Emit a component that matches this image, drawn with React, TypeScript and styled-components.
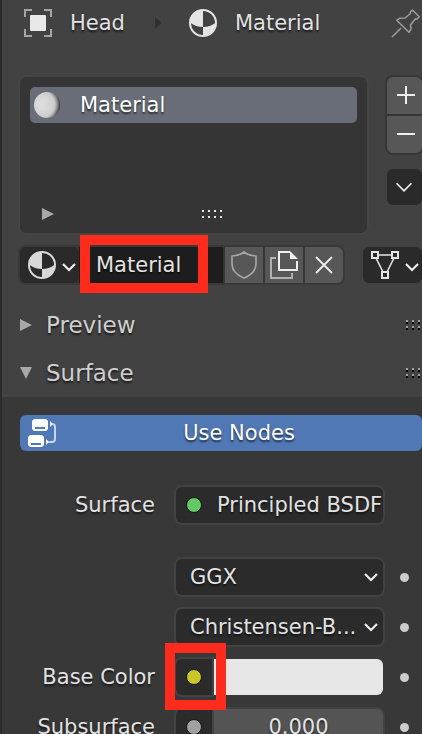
import React from "react";
import styled, { createGlobalStyle, css } from "styled-components";

const GlobalStyle = createGlobalStyle`
  *, *::before, *::after { box-sizing: border-box; }
  html, body { margin: 0; background: #424242; overflow: hidden; }
  body, button, input, select {
    font-family: "DejaVu Sans", sans-serif;
    font-size: 21px;
    line-height: 24px;
    color: #e2e2e2;
  }
  button { margin: 0; padding: 0; border: 0; }
  h2 { margin: 0; font-weight: 400; }
  svg { display: block; flex: none; overflow: visible; }
`;

const textShadow = css`
  text-shadow: 0 2px 2px rgba(0, 0, 0, 0.6);
`;

const Editor = styled.main`
  height: 100vh;
  overflow: hidden;
  border-left: 2px solid #2c2c2c;
  background: #424242;
`;

const Breadcrumbs = styled.nav`
  display: flex;
  align-items: center;
  height: 46px;
  padding-left: 22px;
  ${textShadow}
`;

const Crumb = styled.a`
  display: flex;
  align-items: center;
  gap: 18px;
  color: inherit;
  text-decoration: none;
`;

const CrumbArrow = styled.svg`
  margin: 0 27px 0 30px;
`;

const PinButton = styled.button`
  margin-left: auto;
  margin-right: 2px;
  background: none;
`;

const SlotArea = styled.section`
  display: flex;
  gap: 20px;
  padding: 31px 0 0 18px;
`;

const SlotList = styled.div`
  flex: 1;
  display: flex;
  flex-direction: column;
  height: 156px;
  padding: 10px 10px 0;
  border-radius: 6px;
  background: #353535;
  box-shadow: 0 0 0 2px #454545;
`;

const Slot = styled.button`
  display: flex;
  align-items: center;
  gap: 19px;
  height: 36px;
  padding: 0 4px;
  border-radius: 5px;
  background: #696d77;
  color: #fff;
  ${textShadow}
`;

const SlotFooter = styled.div`
  display: grid;
  grid-template-columns: 160px auto;
  align-items: center;
  height: 28px;
  margin-top: auto;
  margin-bottom: 5px;
  padding: 0 12px;
`;

const BareButton = styled.button`
  justify-self: start;
  background: none;
`;

const SlotTools = styled.div`
  display: flex;
  flex-direction: column;
  gap: 16px;
  width: 35px;
`;

const Stack = styled.div`
  display: flex;
  flex-direction: column;
  gap: 2px;
  border-radius: 6px;
  overflow: hidden;
  background: #353535;
  box-shadow: 0 0 0 2px #373737;
`;

const ToolButton = styled.button<{ $dark?: boolean }>`
  display: flex;
  align-items: center;
  justify-content: center;
  height: ${(p) => (p.$dark ? 36 : 37)}px;
  padding: ${(p) => (p.$dark ? "0 2px 0 0" : "0 0 2px 2px")};
  border-radius: ${(p) => (p.$dark ? 6 : 0)}px;
  background: ${(p) => (p.$dark ? "#2a2a2a" : "#575757")};
`;

const DataRow = styled.div`
  display: flex;
  gap: 20px;
  height: 36px;
  margin: 14px 0 0 18px;
`;

const DataGroup = styled.div`
  flex: 1;
  display: flex;
  gap: 2px;
  border-radius: 6px;
  background: #353535;
  box-shadow: 0 0 0 2px #393939;
`;

const MenuButton = styled.button`
  display: flex;
  align-items: center;
  gap: 6px;
  width: 59px;
  padding-left: 8px;
  border-radius: 6px;
  background: #2a2a2a;
`;

const NameField = styled.div`
  position: relative;
  flex: 1;
  display: flex;
  margin-left: -2px;
  background: #1d1d1d;
`;

const NameInput = styled.input`
  width: 100%;
  min-width: 0;
  padding: 0 0 0 17px;
  border: 0;
  background: none;
  ${textShadow}
`;

const Highlight = styled.span<{ $inset: string }>`
  position: absolute;
  z-index: 1;
  inset: ${(p) => p.$inset};
  border: 10px solid #ff2b1c;
  pointer-events: none;
`;

const GroupButton = styled.button<{ $last?: boolean }>`
  display: flex;
  align-items: center;
  justify-content: center;
  width: 38px;
  border-radius: ${(p) => (p.$last ? "0 6px 6px 0" : "0")};
  background: #575757;
`;

const PanelHeader = styled.h2`
  display: flex;
  align-items: center;
  height: 48px;
  padding: 0 1px 0 18px;
`;

const PanelToggle = styled.button`
  flex: 1;
  display: flex;
  align-items: center;
  gap: 14px;
  background: none;
  color: #cfcfcf;
  font-size: 23px;
  line-height: 28px;
  ${textShadow}
`;

const Panels = styled.div`
  padding-top: 18px;
`;

const PanelBody = styled.section`
  padding: 18px 0 0 18px;
  background: #383838;
`;

const UseNodes = styled.button`
  display: grid;
  grid-template-columns: 28px 1fr;
  align-items: center;
  width: 100%;
  height: 36px;
  padding-left: 8px;
  border-radius: 6px;
  background: #5078b4;
  color: #fff;
  ${textShadow}
`;

const Properties = styled.div`
  display: flex;
  flex-direction: column;
  gap: 14px;
  padding-top: 36px;
`;

const Property = styled.div<{ $spaced?: boolean }>`
  display: grid;
  grid-template-columns: 135px minmax(0, 1fr) 39px;
  align-items: center;
  height: 36px;
  margin-bottom: ${(p) => (p.$spaced ? 22 : 0)}px;
`;

const Label = styled.label`
  text-align: right;
  white-space: nowrap;
  ${textShadow}
`;

const Control = styled.div`
  position: relative;
  display: flex;
  height: 36px;
  margin-left: 21px;
`;

const fieldFrame = css`
  border: 0;
  border-radius: 6px;
  background: #2b2b2b;
  box-shadow: 0 0 0 2px #424242;
`;

const ShaderButton = styled.button`
  ${fieldFrame}
  ${textShadow}
  flex: 1;
  display: flex;
  align-items: center;
  gap: 15px;
  min-width: 0;
  padding-left: 10px;
  overflow: hidden;
  white-space: nowrap;
`;

const Select = styled.select`
  ${fieldFrame}
  ${textShadow}
  appearance: none;
  width: 100%;
  padding: 0 24px 0 14px;
`;

const SelectArrow = styled.span`
  position: absolute;
  right: 5px;
  top: 14px;
  pointer-events: none;
`;

const SocketButton = styled.button`
  ${fieldFrame}
  position: relative;
  display: flex;
  align-items: center;
  justify-content: center;
  width: 36px;
  margin-right: 2px;
  border-radius: 6px 0 0 6px;
`;

const ColorSwatch = styled.button`
  flex: 1;
  border-radius: 0 6px 6px 0;
  background: #e7e7e7;
`;

const NumberInput = styled.input`
  ${fieldFrame}
  ${textShadow}
  flex: 1;
  min-width: 0;
  padding: 0;
  border-radius: 0 6px 6px 0;
  background: #545454;
  text-align: center;
`;

const Socket = styled.span<{ $color: string }>`
  flex: none;
  width: 16px;
  height: 16px;
  border: 1px solid #151515;
  border-radius: 50%;
  background: ${(p) => p.$color};
`;

const KeyDot = styled.button`
  justify-self: center;
  width: 9px;
  height: 9px;
  margin-left: 4px;
  border-radius: 50%;
  background: #cccccc;
`;

const MenuChevron = styled.span`
  padding-top: 3px;
`;

const Chevron = ({ width = 14 }: { width?: number }) => (
  <svg width={width} height={width / 2 + 1} viewBox="0 0 14 8" fill="none" stroke="#eeeeee" strokeWidth={width > 14 ? 1.4 : 2.2}>
    <path d="M1 1l6 6 6-6" />
  </svg>
);

const MaterialIcon = ({ color = "#e4e4e4" }: { color?: string }) => (
  <svg width="28" height="28" viewBox="0 0 28 28">
    <circle cx="14" cy="14" r="13" fill="none" stroke={color} strokeWidth="2" />
    <path d="M14 1A13 13 0 0 0 1 13.500Q7 18 14 18Z" fill={color} />
    <path d="M14 18Q21 18 27 13.500A13 13 0 0 1 14 27Z" fill={color} />
  </svg>
);

const ObjectIcon = () => (
  <svg width="28" height="28" viewBox="0 0 28 28">
    <path d="M1 8V1H8M20 1H27V8M27 20V27H20M8 27H1V20" fill="none" stroke="#a5a5a5" strokeWidth="2" />
    <rect x="6" y="6" width="16" height="16" rx="1" fill="#e8e8e8" />
  </svg>
);

const PinIcon = () => (
  <svg width="28" height="28" viewBox="0 0 28 28" fill="none" stroke="#9a9a9a" strokeWidth="1.6" strokeLinejoin="round">
    <path d="M20.500 1L27.300 7.800L25 10L23.500 9.800L18.500 16L19 20L17 23.300L4.700 11.300L7.500 9.300L13 9L18.500 4.500L18.300 3ZM9 19L0 28" />
  </svg>
);

const SphereIcon = () => (
  <svg width="27" height="26" viewBox="0 0 27 26">
    <defs>
      <radialGradient id="sphere" cx="0.28" cy="0.48" r="0.73">
        <stop offset="0" stopColor="#e0e0e0" />
        <stop offset="0.7" stopColor="#cdcdcd" />
        <stop offset="0.86" stopColor="#888888" />
        <stop offset="1" stopColor="#2c2c2c" />
      </radialGradient>
    </defs>
    <circle cx="13" cy="13" r="13" fill="url(#sphere)" />
  </svg>
);

const ShieldIcon = () => (
  <svg width="28" height="28" viewBox="0 0 28 28" fill="none" stroke="#a5a5a5" strokeWidth="1.700" strokeLinejoin="round">
    <path d="M14 1Q9 5 2 5V13Q2 22 14 27Q26 22 26 13V5Q19 5 14 1Z" />
  </svg>
);

const DuplicateIcon = () => (
  <svg width="28" height="28" viewBox="0 0 28 28" fill="none" strokeWidth="2">
    <path d="M6 7H1V27H22V22" stroke="#b0b0b0" />
    <path d="M27 10V19H9V1H20" stroke="#f0f0f0" />
    <path d="M20 0L28 8H20Z" fill="#f0f0f0" />
  </svg>
);

const CloseIcon = () => (
  <svg width="16" height="16" viewBox="0 0 16 16" stroke="#eeeeee" strokeWidth="1.800">
    <path d="M0 0L16 16M16 0L0 16" />
  </svg>
);

const MeshIcon = () => (
  <svg width="28" height="28" viewBox="0 0 28 28" fill="none" stroke="#e4e4e4" strokeWidth="2">
    <path d="M7 4H21M5 7L12 21M23 7L16 21" strokeWidth="1.600" />
    <path d="M1 1H7V7H1ZM21 1H27V7H21ZM11 21H17V27H11Z" />
  </svg>
);

const NodesIcon = () => (
  <svg width="28" height="28" viewBox="0 0 28 28" fill="#ffffff">
    <path fillRule="evenodd" d="M6 0H18L20 2V10L18 12H6L4 10V2ZM7 8V10H17V8Z" />
    <path fillRule="evenodd" d="M2 16H14L16 18V26L14 28H2L0 26V18ZM3 24V26H13V24Z" />
    <path d="M22 2L25 5L22 8ZM18 20L21 23L18 26Z" />
    <path d="M24 5Q27 5 27 8V20Q27 23 24 23H20" fill="none" stroke="#c6d3e8" strokeWidth="2" />
  </svg>
);

const Triangle = ({ open = false }: { open?: boolean }) => (
  <svg width="12" height="12" viewBox="0 0 12 12" fill="#a8a8a8">
    <path d={open ? "M0 0H12L6 12Z" : "M0 0V12L12 6Z"} />
  </svg>
);

const PlusMinus = ({ plus = false }: { plus?: boolean }) => (
  <svg width="18" height="18" viewBox="0 0 18 18" stroke="#eeeeee" strokeWidth="2">
    <path d={plus ? "M0 9H18M9 0V18" : "M0 9H18"} />
  </svg>
);

const SlotGrip = () => (
  <svg width="22" height="10" viewBox="0 0 22 10" fill="#e6e6e6">
    {[0, 6, 12, 18].map((x) => (
      <path key={x} d={`M${x} 1h2v2h-2zM${x} 7h2v2h-2z`} />
    ))}
  </svg>
);

const PanelGrip = () => (
  <svg width="16" height="10" viewBox="0 0 16 10">
    {[0, 6, 12].map((x) => (
      <g key={x}>
        <path d={`M${x + 1} 0h2v2h-2zM${x + 1} 6h2v2h-2z`} fill="#a0a0a0" />
        <path d={`M${x + 1} 2h2v2h-2zM${x + 1} 8h2v2h-2z`} fill="#080808" />
      </g>
    ))}
  </svg>
);

function Dropdown({ id, label, options }: { id: string; label: string; options: string[] }) {
  return (
    <Property>
      <span />
      <Control>
        <Select id={id} aria-label={label}>
          {options.map((option) => (
            <option key={option}>{option}</option>
          ))}
        </Select>
        <SelectArrow>
          <Chevron />
        </SelectArrow>
      </Control>
      <KeyDot aria-label={`Animate ${label}`} />
    </Property>
  );
}

export default function App() {
  return (
    <>
      <GlobalStyle />
      <Editor>
        <Breadcrumbs>
          <Crumb href="#head">
            <ObjectIcon />
            Head
          </Crumb>
          <CrumbArrow width="7" height="12" viewBox="0 0 7 12" fill="#303030">
            <path d="M0 0L7 6L0 12Z" />
          </CrumbArrow>
          <Crumb href="#material">
            <MaterialIcon />
            Material
          </Crumb>
          <PinButton aria-label="Pin">
            <PinIcon />
          </PinButton>
        </Breadcrumbs>

        <SlotArea>
          <SlotList>
            <Slot>
              <SphereIcon />
              Material
            </Slot>
            <SlotFooter>
              <BareButton aria-label="Show filter">
                <Triangle />
              </BareButton>
              <SlotGrip />
            </SlotFooter>
          </SlotList>
          <SlotTools>
            <Stack>
              <ToolButton aria-label="Add slot">
                <PlusMinus plus />
              </ToolButton>
              <ToolButton aria-label="Remove slot">
                <PlusMinus />
              </ToolButton>
            </Stack>
            <ToolButton $dark aria-label="Slot specials">
              <Chevron width={18} />
            </ToolButton>
          </SlotTools>
        </SlotArea>

        <DataRow>
          <DataGroup>
            <MenuButton aria-label="Browse material">
              <MaterialIcon color="#d8d8d8" />
              <MenuChevron>
                <Chevron />
              </MenuChevron>
            </MenuButton>
            <NameField>
              <NameInput aria-label="Material name" defaultValue="Material" />
              <Highlight $inset="-12px 15px -10px 1px" />
            </NameField>
            <GroupButton aria-label="Fake user">
              <ShieldIcon />
            </GroupButton>
            <GroupButton aria-label="New material">
              <DuplicateIcon />
            </GroupButton>
            <GroupButton $last aria-label="Unlink">
              <CloseIcon />
            </GroupButton>
          </DataGroup>
          <MenuButton aria-label="Link">
            <MeshIcon />
            <MenuChevron>
              <Chevron />
            </MenuChevron>
          </MenuButton>
        </DataRow>

        <Panels>
          <PanelHeader>
            <PanelToggle aria-expanded={false}>
              <Triangle />
              Preview
            </PanelToggle>
            <PanelGrip />
          </PanelHeader>
          <PanelHeader>
            <PanelToggle aria-expanded>
              <Triangle open />
              Surface
            </PanelToggle>
            <PanelGrip />
          </PanelHeader>
          <PanelBody>
            <UseNodes>
              <NodesIcon />
              Use Nodes
            </UseNodes>
            <Properties>
              <Property $spaced>
                <Label htmlFor="shader">Surface</Label>
                <Control>
                  <ShaderButton id="shader">
                    <Socket $color="#63c763" />
                    Principled BSDF
                  </ShaderButton>
                </Control>
              </Property>
              <Dropdown id="distribution" label="Distribution" options={["GGX", "Multiscatter GGX"]} />
              <Dropdown id="method" label="Subsurface method" options={["Christensen-B...", "Random Walk"]} />
              <Property>
                <Label htmlFor="base-color">Base Color</Label>
                <Control>
                  <SocketButton aria-label="Base color input">
                    <Socket $color="#c7c729" />
                    <Highlight $inset="-16px -14px -15px -11px" />
                  </SocketButton>
                  <ColorSwatch id="base-color" />
                </Control>
                <KeyDot aria-label="Animate base color" />
              </Property>
              <Property>
                <Label htmlFor="subsurface">Subsurface</Label>
                <Control>
                  <SocketButton aria-label="Subsurface input">
                    <Socket $color="#a1a1a1" />
                  </SocketButton>
                  <NumberInput id="subsurface" inputMode="decimal" defaultValue="0.000" />
                </Control>
                <KeyDot aria-label="Animate subsurface" />
              </Property>
            </Properties>
          </PanelBody>
        </Panels>
      </Editor>
    </>
  );
}
